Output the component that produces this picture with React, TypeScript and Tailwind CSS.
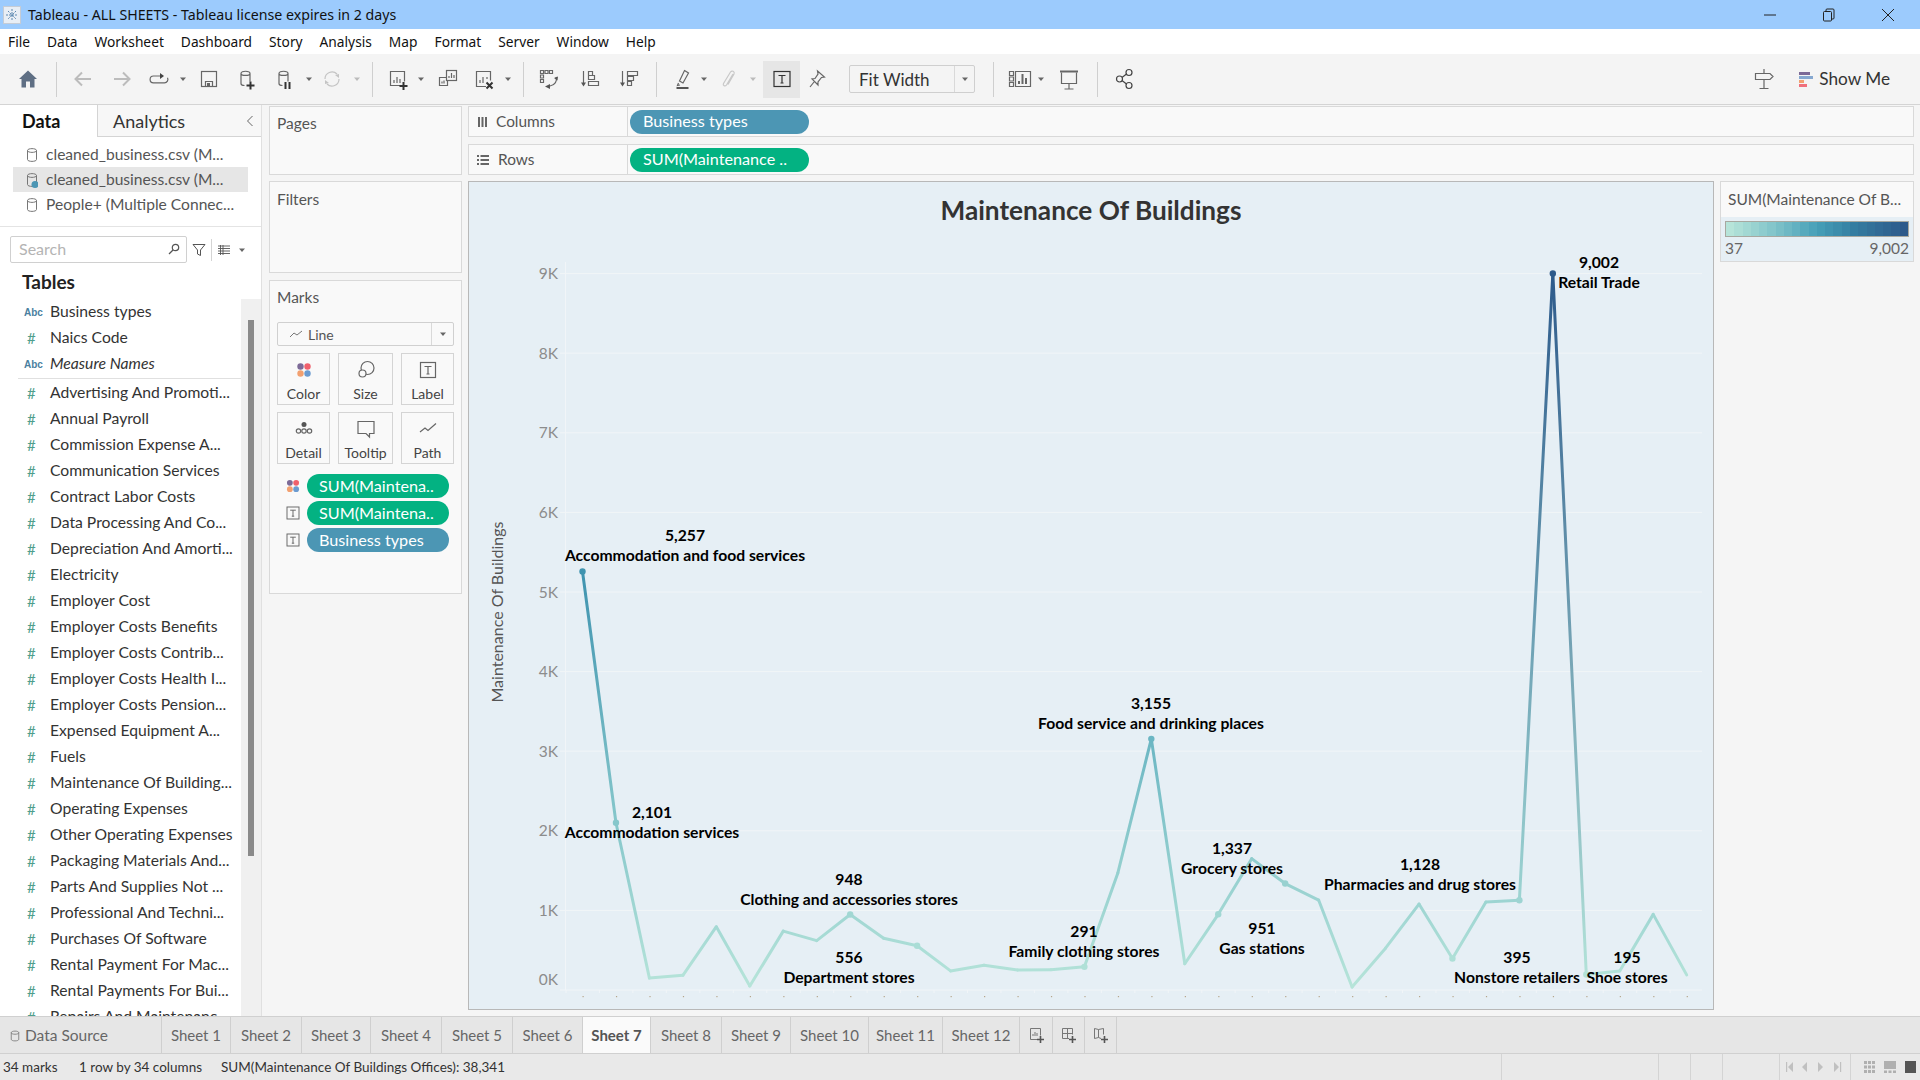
import type { ReactNode } from 'react'

const book = "font-['Lato',sans-serif]"

const connections = ['cleaned_business.csv (M...', 'cleaned_business.csv (M...', 'People+ (Multiple Connec...']

const fields = [
  'Advertising And Promoti...',
  'Annual Payroll',
  'Commission Expense A...',
  'Communication Services',
  'Contract Labor Costs',
  'Data Processing And Co...',
  'Depreciation And Amorti...',
  'Electricity',
  'Employer Cost',
  'Employer Costs Benefits',
  'Employer Costs Contrib...',
  'Employer Costs Health I...',
  'Employer Costs Pension...',
  'Expensed Equipment A...',
  'Fuels',
  'Maintenance Of Building...',
  'Operating Expenses',
  'Other Operating Expenses',
  'Packaging Materials And...',
  'Parts And Supplies Not ...',
  'Professional And Techni...',
  'Purchases Of Software',
  'Rental Payment For Mac...',
  'Rental Payments For Bui...',
  'Repairs And Maintenanc...',
]

const sheets = [
  { name: 'Sheet 1', w: 'w-[69px]' },
  { name: 'Sheet 2', w: 'w-[71px]' },
  { name: 'Sheet 3', w: 'w-[69px]' },
  { name: 'Sheet 4', w: 'w-[71px]' },
  { name: 'Sheet 5', w: 'w-[71px]' },
  { name: 'Sheet 6', w: 'w-[70px]' },
  { name: 'Sheet 7', w: 'w-[68px]', active: true },
  { name: 'Sheet 8', w: 'w-[71px]' },
  { name: 'Sheet 9', w: 'w-[69px]' },
  { name: 'Sheet 10', w: 'w-[78px]' },
  { name: 'Sheet 11', w: 'w-[74px]' },
  { name: 'Sheet 12', w: 'w-[77px]' },
]

const values = [
  5257, 2101, 150, 185, 795, 50, 740, 620, 948, 650, 556, 240, 310, 250, 255, 291, 1470, 3155, 330, 951, 1650, 1337,
  1130, 37, 525, 1080, 395, 1105, 1128, 9002, 195, 240, 950, 190,
]
const dotted = [0, 1, 8, 10, 15, 17, 19, 21, 26, 28, 29, 30]

const labels = [
  { v: '5,257', n: 'Accommodation and food services', x: 685, y: 536 },
  { v: '2,101', n: 'Accommodation services', x: 652, y: 813 },
  { v: '948', n: 'Clothing and accessories stores', x: 849, y: 880 },
  { v: '556', n: 'Department stores', x: 849, y: 958 },
  { v: '291', n: 'Family clothing stores', x: 1084, y: 932 },
  { v: '3,155', n: 'Food service and drinking places', x: 1151, y: 704 },
  { v: '1,337', n: 'Grocery stores', x: 1232, y: 849 },
  { v: '951', n: 'Gas stations', x: 1262, y: 929 },
  { v: '1,128', n: 'Pharmacies and drug stores', x: 1420, y: 865 },
  { v: '395', n: 'Nonstore retailers', x: 1517, y: 958 },
  { v: '195', n: 'Shoe stores', x: 1627, y: 958 },
  { v: '9,002', n: 'Retail Trade', x: 1599, y: 263 },
]

const stops: [number, number[]][] = [
  [0, [182, 228, 217]],
  [0.25, [130, 196, 202]],
  [0.5, [70, 160, 184]],
  [0.72, [52, 124, 160]],
  [1, [45, 90, 139]],
]

const ramp = (t: number) => {
  for (let i = 1; i < stops.length; i++) {
    if (t <= stops[i][0]) {
      const [a, ca] = stops[i - 1]
      const [b, cb] = stops[i]
      const k = (t - a) / (b - a)
      return `rgb(${ca.map((c, j) => Math.round(c + (cb[j] - c) * k)).join(',')})`
    }
  }
  return 'rgb(45,90,139)'
}

const colorOf = (v: number) => ramp((v - 37) / (9002 - 37))
const px = (i: number) => 582.5 + 33.46 * i
const py = (v: number) => 990 - v * 0.0796

const Ico = ({ children, className = '' }: { children: ReactNode; className?: string }) => (
  <svg viewBox="0 0 28 28" fill="none" stroke="#666" strokeWidth="1.2" className={`w-[28px] h-[28px] shrink-0 ${className}`}>
    {children}
  </svg>
)

const Caret = ({ className = '', light = false }: { className?: string; light?: boolean }) => (
  <svg viewBox="0 0 10 6" className={`w-[10px] h-[6px] shrink-0 ${className}`}>
    <path d="M2 1.5h6L5 5z" fill={light ? '#bbb' : '#666'} />
  </svg>
)

const Divider = ({ className = '' }: { className?: string }) => <div className={`w-px h-[35px] bg-[#cfcfcf] shrink-0 ${className}`} />

const Dots = () => (
  <>
    <circle cx="10.5" cy="10.5" r="3.2" fill="#7c6a97" stroke="none" />
    <circle cx="17.5" cy="10.5" r="3.2" fill="#f0606c" stroke="none" />
    <circle cx="10.5" cy="17.5" r="3.2" fill="#f2a070" stroke="none" />
    <circle cx="17.5" cy="17.5" r="3.2" fill="#6b9bd0" stroke="none" />
  </>
)

const TBox = () => (
  <>
    <rect x="6.5" y="6.5" width="15" height="15" />
    <path d="M10.5 10.5h7M14 10.5v7.5M12.5 18h3" />
  </>
)

const Db = () => <path d="M8 8.5c0-3 9-3 9 0v8M8 8.5c0 2.6 9 2.6 9 0M8 8.5v10c0 1.5 2 2 3.5 2" />

const Pill = ({ label, blue, className = '' }: { label: string; blue?: boolean; className?: string }) => (
  <div
    className={`h-[24px] rounded-full flex items-center text-white text-[16.2px] ${blue ? 'bg-[#4c96b4]' : 'bg-[#03b282]'} ${className}`}
  >
    {label}
  </div>
)

const MarkCard = ({ label, w, children }: { label: string; w: string; children: ReactNode }) => (
  <div className={`${w} h-[52px] border border-[#d4d4d4] flex flex-col items-center text-[14px] text-[#444]`}>
    <div className="h-[31px] flex items-center">{children}</div>
    <div className="leading-[17px]">{label}</div>
  </div>
)

const FieldRow = ({ name, abc, italic }: { name: string; abc?: boolean; italic?: boolean }) => (
  <div className="h-[26px] shrink-0 flex items-center text-[15.7px] text-[#333] whitespace-nowrap">
    <span className={`w-[50px] pl-[24px] ${abc ? "text-[#4a7f9f] text-[10px] font-bold font-['Liberation_Sans',sans-serif]" : 'text-[#4f9e8c] text-[15px] pl-[27px]'}`}>
      {abc ? 'Abc' : '#'}
    </span>
    <span className={italic ? 'italic' : ''}>{name}</span>
  </div>
)

const ShelfBox = ({ icon, label, pill, blue, className = '' }: { icon: ReactNode; label: string; pill: string; blue?: boolean; className?: string }) => (
  <div className={`h-[31px] border border-[#d9d9d9] bg-[#f9f9f9] flex items-center ${className}`}>
    <div className="w-[159px] h-full border-r border-[#d9d9d9] flex items-center pl-[8px] gap-[9px] text-[15.4px] text-[#555] pt-[1px]">
      {icon}
      {label}
    </div>
    <Pill label={pill} blue={blue} className="w-[179px] ml-[2px] pl-[13px]" />
  </div>
)

const Chart = () => (
  <svg viewBox="468 181 1246 829" className="w-[1246px] h-[829px] block">
    <text x="1091" y="220" textAnchor="middle" className="text-[26.2px] font-bold" fill="#333">
      Maintenance Of Buildings
    </text>
    <text transform="translate(503 612) rotate(-90)" textAnchor="middle" className="text-[16px]" fill="#555">
      Maintenance Of Buildings
    </text>
    <line x1="565.5" x2="565.5" y1="262" y2="990" stroke="#f1f5f8" />
    {[0, 1, 2, 3, 4, 5, 6, 7, 8, 9].map((k) => (
      <g key={k}>
        <line x1="560" x2="1702" y1={990 - k * 79.6} y2={990 - k * 79.6} stroke="#f1f5f8" />
        <text x="558" y={k === 0 ? 985 : 995.500 - k * 79.6} textAnchor="end" className="text-[15.5px]" fill="#8c8c8c">
          {k}K
        </text>
      </g>
    ))}
    {values.map((_, i) => (
      <g key={i}>
        <line x1={566 + i * 33.46} x2={566 + i * 33.46} y1="990" y2="993" stroke="#f1f5f8" />
        <rect x={px(i)} y="996" width="1.2" height="1.2" fill="#b5a58a" />
      </g>
    ))}
    <defs>
      {values.slice(1).map((v, i) => (
        <linearGradient key={i} id={`seg${i}`} gradientUnits="userSpaceOnUse" x1={px(i)} y1={py(values[i])} x2={px(i + 1)} y2={py(v)}>
          <stop offset="0" stopColor={colorOf(values[i])} />
          <stop offset="1" stopColor={colorOf(v)} />
        </linearGradient>
      ))}
    </defs>
    {values.slice(1).map((v, i) => (
      <line key={i} x1={px(i)} y1={py(values[i])} x2={px(i + 1)} y2={py(v)} stroke={`url(#seg${i})`} strokeWidth="3" strokeLinecap="round" />
    ))}
    {dotted.map((i) => (
      <circle key={i} cx={px(i)} cy={py(values[i])} r="3.2" fill={colorOf(values[i])} />
    ))}
    {labels.map((l) => (
      <g key={l.n} className="text-[15.7px] font-bold" fill="#000" textAnchor="middle">
        <text x={l.x} y={l.y + 5}>
          {l.v}
        </text>
        <text x={l.x} y={l.y + 25}>
          {l.n}
        </text>
      </g>
    ))}
  </svg>
)

export default function App() {
  return (
    <div className={`w-[1920px] h-[1080px] overflow-hidden flex flex-col bg-[#f5f5f5] ${book}`}>
      {/* title bar */}
      <div className="h-[29px] shrink-0 bg-[#9ccbfd] flex items-center font-['Noto_Sans',sans-serif] text-[14.2px] text-[#111]">
        <svg viewBox="0 0 18 18" className="w-[18px] h-[18px] ml-[3px] mr-[7px]">
          <rect x="0.5" y="0.5" width="17" height="17" fill="#e8eef5" stroke="#c5ccd6" />
          <path d="M9 3v12M3 9h12M5 5l8 8M13 5l-8 8" stroke="#5b87b0" strokeWidth="1" strokeDasharray="2 1" />
        </svg>
        Tableau - ALL SHEETS - Tableau license expires in 2 days
        <div className="ml-auto flex items-center">
          <svg viewBox="0 0 14 14" className="w-[14px] h-[14px] mr-[45px]">
            <path d="M1 7h12" stroke="#222" strokeWidth="1" />
          </svg>
          <svg viewBox="0 0 14 14" className="w-[14px] h-[14px] mr-[45px]" fill="none" stroke="#222">
            <rect x="1.5" y="3.5" width="8" height="9.5" rx="1" />
            <path d="M4 3.5V2a1 1 0 0 1 1-1h6a1 1 0 0 1 1 1v8a1 1 0 0 1-1 1H9.5" />
          </svg>
          <svg viewBox="0 0 14 14" className="w-[14px] h-[14px] mr-[25px]">
            <path d="M1 1l12 12M13 1L1 13" stroke="#222" strokeWidth="1" />
          </svg>
        </div>
      </div>

      {/* menu */}
      <div className="h-[25px] shrink-0 bg-white flex items-center gap-[17px] px-[8px] pt-[1px] font-['Noto_Sans',sans-serif] text-[13.75px] text-[#111]">
        {['File', 'Data', 'Worksheet', 'Dashboard', 'Story', 'Analysis', 'Map', 'Format', 'Server', 'Window', 'Help'].map((m) => (
          <span key={m}>{m}</span>
        ))}
      </div>

      {/* toolbar */}
      <div className="h-[51px] shrink-0 bg-[#f4f4f4] border-b border-[#d4d4d4] flex items-center pl-[14px]">
        <Ico>
          <path d="M14 5.5L23 14h-2.5v8.5h-4.5v-6h-4v6H7.500V14H5z" fill="#5f6f84" stroke="none" />
        </Ico>
        <Divider className="ml-[14px]" />
        <Ico className="ml-[12px]">
          <path d="M22 14H6.500M13 7.500L6.500 14l6.500 6.500" stroke="#bcbcbc" strokeWidth="2" />
        </Ico>
        <Ico className="ml-[11px]">
          <path d="M6 14h15.500M15 7.500l6.500 6.500-6.500 6.500" stroke="#bcbcbc" strokeWidth="2" />
        </Ico>
        <Ico className="ml-[9px]">
          <path d="M15 11H8.500a3.400 3.400 0 0 0 0 6.800h11a3.400 3.400 0 0 0 3-5" />
          <path d="M15 8l4 3-4 3z" fill="#444" stroke="none" />
        </Ico>
        <Caret className="ml-[5px]" />
        <Ico className="ml-[7px]">
          <rect x="6.500" y="6.500" width="15" height="15" />
          <path d="M10.500 21.500v-5h7v5" />
          <rect x="12" y="18" width="3" height="3" fill="#666" stroke="none" />
        </Ico>
        <Ico className="ml-[10px]">
          <Db />
          <path d="M13.500 20.500h8M17.500 16.500v8" stroke="#333" strokeWidth="2" />
        </Ico>
        <Ico className="ml-[10px]">
          <Db />
          <path d="M14.500 17v7M18.500 17v7" stroke="#333" strokeWidth="2" />
        </Ico>
        <Caret className="ml-[5px]" />
        <Ico className="ml-[4px]">
          <path d="M7 14a7 7 0 0 1 12-5M21 14a7 7 0 0 1-12 5" stroke="#c4c4c4" />
          <path d="M17 10l4-1 0 4zM11 18l-4 1 0-4z" fill="#c4c4c4" stroke="none" />
        </Ico>
        <Caret className="ml-[6px]" light />
        <Divider className="ml-[10px]" />
        <Ico className="ml-[11px]">
          <path d="M19.500 20.500h-13v-14h14v10M10 18v-3M13 18v-6M16 18v-4" />
          <path d="M15.500 21h8M19.500 17v8" stroke="#333" strokeWidth="2" />
        </Ico>
        <Caret className="ml-[4px]" />
        <Ico className="ml-[7px]">
          <rect x="13.500" y="5.500" width="10" height="10" />
          <path d="M16 13v-2M18.500 13V8M21 13v-3" />
          <path d="M13 12.500H6.500v8h8v-5M9 18.500v-2M11 18.500v-3" />
        </Ico>
        <Ico className="ml-[9px]">
          <path d="M16 21.500H6.500v-15h14v9M10 18v-3M13 18v-6M17 14v-2" />
          <path d="M16.500 17.500l6 6M22.500 17.500l-6 6" stroke="#333" strokeWidth="2" />
        </Ico>
        <Caret className="ml-[5px]" />
        <Divider className="ml-[10px]" />
        <Ico className="ml-[11px]">
          <path d="M5.500 5.500h3v3h-3zM10 5.500h3v3h-3zM14.500 5.500h3v3h-3zM5.500 10h3v3h-3zM5.500 14.500h3v3h-3z" />
          <path d="M21 12c1.500 4-1 8-6 9" />
          <path d="M10 21.500l5-2.500v5zM19 13l4-1.500-.5 4z" fill="#555" stroke="none" />
        </Ico>
        <Ico className="ml-[12px]">
          <path d="M8.500 6v14" />
          <path d="M6 17.500l2.500 4 2.500-4z" fill="#555" stroke="none" />
          <path d="M13.500 6.500h4v4h-4zM13.500 10.500h6v4h-6zM13.500 16.500h10v4h-10z" />
        </Ico>
        <Ico className="ml-[11px]">
          <path d="M8.500 6v14" />
          <path d="M6 17.500l2.500 4 2.500-4z" fill="#555" stroke="none" />
          <path d="M13.500 6.500h10v4h-10zM13.500 11.500h6v4h-6zM13.500 16.500h4v4h-4z" />
        </Ico>
        <Divider className="ml-[14px]" />
        <Ico className="ml-[12px]">
          <path d="M15.500 5.500l4 2.500-5.500 10-3.500-2z" />
          <path d="M9.500 18l-1 2.500 2.500-.5" />
          <rect x="7.500" y="22" width="12" height="2" fill="#555" stroke="none" />
        </Ico>
        <Caret className="ml-[2px]" />
        <Ico className="ml-[6px]">
          <path d="M18 9l-6.500 11c-1.500 2-4 .5-3-1.500L15.500 7c1.500-2 4.500-.5 3.500 2l-6 10.500" stroke="#c8c8c8" />
        </Ico>
        <Caret className="ml-[5px]" light />
        <div className="w-[37px] h-[37px] ml-[5px] bg-[#e6e6e6] flex items-center justify-center shrink-0">
          <Ico>
            <rect x="6" y="6.500" width="16" height="15" stroke="#333" />
            <path d="M10.500 10.500h7M14 10.500v7.500M12.500 18h3" stroke="#333" />
          </Ico>
        </div>
        <Ico className="ml-[3px]">
          <path d="M14.500 6l7 6-3 .5-3.500 4.500 0 3-6-6 3-.500 3-4.500zM11 17l-4 5" />
        </Ico>
        <div className="w-[126px] h-[28px] ml-[18px] shrink-0 bg-[#f4f4f4] border border-[#cfcfcf] rounded-[2px] flex items-center text-[17px] text-[#333]">
          <span className="w-[104px] pl-[9px] pt-[1px]">Fit Width</span>
          <div className="h-full border-l border-[#d9d9d9] flex-1 flex items-center justify-center">
            <Caret />
          </div>
        </div>
        <Divider className="ml-[18px]" />
        <Ico className="ml-[12px]">
          <path d="M3.500 6.500h4v4h-4zM3.500 12h4v4h-4zM3.500 17.500h4v4h-4zM9.500 6.500h15v15h-15z" />
          <path d="M13 19v-3M16.500 19V9M20 19v-6" strokeWidth="2" />
        </Ico>
        <Caret className="ml-[2px]" />
        <Ico className="ml-[9px]">
          <path d="M5 6.500h18" strokeWidth="2" />
          <path d="M6.500 7.500v11h15v-11M14 18.500v5M9.500 24h9" />
        </Ico>
        <Divider className="ml-[14px]" />
        <Ico className="ml-[12px]">
          <circle cx="19" cy="7.500" r="3" stroke="#444" />
          <circle cx="9.500" cy="14" r="3" stroke="#444" />
          <circle cx="19" cy="20.500" r="3" stroke="#444" />
          <path d="M12 12.500l4.500-3.500M12 15.500l4.500 3.500" stroke="#444" />
        </Ico>

        <Ico className="ml-auto mr-[-3px]">
          <path d="M14 4v19M9.500 23.500h9" />
          <path d="M5.500 8.500h14.500l3 3-3 3h-14.500z" fill="#f4f4f4" />
        </Ico>
        <div className="w-[14px] ml-[24px] flex flex-col gap-[1px] shrink-0">
          <div className="h-[3px] w-[11px] bg-[#7c6a97]" />
          <div className="h-[3px] w-[14px] bg-[#86a8d0]" />
          <div className="h-[3px] w-[5px] bg-[#f2a070]" />
          <div className="h-[3px] w-[8px] bg-[#f0707c]" />
        </div>
        <span className="ml-[6px] mr-[30px] text-[17.2px] text-[#333]">Show Me</span>
      </div>

      {/* main */}
      <div className="flex-1 min-h-0 flex">
        {/* data pane */}
        <div className="w-[262px] shrink-0 bg-white border-r border-[#e0e0e0] flex flex-col">
          <div className="h-[32px] shrink-0 flex text-[18px] text-[#333]">
            <div className="w-[98px] flex items-center pl-[22px] pt-[1px] font-bold text-[#111] border-r border-[#d4d4d4]">Data</div>
            <div className="flex-1 flex items-center pl-[15px] pt-[1px] bg-[#f7f7f7] border-b border-[#d4d4d4]">
              Analytics
              <svg viewBox="0 0 8 12" className="w-[8px] h-[12px] ml-auto mr-[7px]" fill="none" stroke="#666">
                <path d="M6.500 1L1.500 6l5 5" />
              </svg>
            </div>
          </div>
          <div className="pt-[5px] pb-[9px] border-b border-[#e4e4e4] shrink-0">
            {connections.map((c, i) => (
              <div key={i} className={`h-[25px] ml-[13px] w-[235px] flex items-center text-[15.6px] text-[#555] whitespace-nowrap ${i === 1 ? 'bg-[#e6e6e6]' : ''}`}>
                <svg viewBox="0 0 12 16" className="w-[12px] h-[16px] ml-[13px] mr-[8px] shrink-0" fill="none" stroke="#777">
                  <path d="M1.500 3.500c0-2.500 9-2.500 9 0v9c0 2.500-9 2.500-9 0zM1.500 3.500c0 2.500 9 2.500 9 0" />
                  {i === 1 && <circle cx="9" cy="12.500" r="3.500" fill="#4c96b4" stroke="none" />}
                </svg>
                {c}
              </div>
            ))}
          </div>
          <div className="mt-[9px] flex items-center shrink-0">
            <div className="w-[177px] h-[27px] ml-[10px] pb-[2px] border border-[#d0d0d0] rounded-[2px] flex items-center pl-[8px] pr-[6px] text-[16px] text-[#b4b4b4]">
              Search
              <svg viewBox="0 0 12 12" className="w-[12px] h-[12px] ml-auto" fill="none" stroke="#555" strokeWidth="1.2">
                <circle cx="7.500" cy="4.500" r="3.200" />
                <path d="M5 7l-4 4" />
              </svg>
            </div>
            <svg viewBox="0 0 14 14" className="w-[14px] h-[14px] ml-[5px]" fill="none" stroke="#555">
              <path d="M1 1.500h12L8.500 7v5.500l-3-1.500V7z" />
            </svg>
            <div className="w-px h-[22px] bg-[#d4d4d4] ml-[5px]" />
            <svg viewBox="0 0 12 10" className="w-[12px] h-[10px] ml-[6px]" fill="none" stroke="#555">
              <path d="M0 1h12M0 3.500h12M0 6h12M0 8.500h12M2.500 0v10M5 0v10" strokeWidth="0.9" />
            </svg>
            <Caret className="ml-[7px]" />
          </div>
          <div className="h-[36px] shrink-0 flex items-center pl-[22px] pt-[2px] font-bold text-[19px] text-[#222]">Tables</div>
          <div className="flex-1 min-h-0 flex">
            <div className="flex-1 min-w-0 overflow-hidden">
              <FieldRow name="Business types" abc />
              <FieldRow name="Naics Code" />
              <FieldRow name="Measure Names" abc italic />
              <div className="h-[1px] mt-[1px] mb-[1px] ml-[18px] bg-[#e0e0e0]" />
              {fields.map((f) => (
                <FieldRow key={f} name={f} />
              ))}
            </div>
            <div className="w-[20px] shrink-0 bg-[#f0f0f0] pl-[7px] pt-[21px]">
              <div className="w-[6px] h-[536px] bg-[#8a8a8a]" />
            </div>
          </div>
        </div>

        {/* shelves */}
        <div className="w-[193px] shrink-0 ml-[7px] pt-[1px] flex flex-col gap-[6px] text-[15.5px] text-[#555]">
          <div className="h-[69px] border border-[#d9d9d9] bg-[#f9f9f9] pl-[7px] pt-[5px]">Pages</div>
          <div className="h-[92px] border border-[#d9d9d9] bg-[#f9f9f9] pl-[7px] pt-[6px]">Filters</div>
          <div className="h-[314px] mt-[1px] border border-[#d9d9d9] bg-[#f9f9f9] px-[7px] pt-[5px]">
            Marks
            <div className="h-[24px] mt-[13px] border border-[#d0d0d0] rounded-[2px] flex items-center text-[14px]">
              <svg viewBox="0 0 14 10" className="w-[14px] h-[10px] ml-[11px] mr-[5px]" fill="none" stroke="#777">
                <path d="M1 8l4-4 3 2 5-4" />
              </svg>
              Line
              <div className="ml-auto w-[22px] h-full border-l border-[#d9d9d9] flex items-center justify-center">
                <Caret />
              </div>
            </div>
            <div className="flex gap-[8px] mt-[7px]">
              <MarkCard label="Color" w="w-[53px]">
                <Ico>
                  <Dots />
                </Ico>
              </MarkCard>
              <MarkCard label="Size" w="w-[55px]">
                <Ico>
                  <circle cx="15.500" cy="12" r="6.500" />
                  <circle cx="10.500" cy="17.500" r="3.500" fill="#f9f9f9" />
                </Ico>
              </MarkCard>
              <MarkCard label="Label" w="w-[53px]">
                <Ico>
                  <TBox />
                </Ico>
              </MarkCard>
            </div>
            <div className="flex gap-[8px] mt-[7px]">
              <MarkCard label="Detail" w="w-[53px]">
                <Ico>
                  <circle cx="14" cy="9.500" r="2.500" fill="#555" stroke="none" />
                  <circle cx="8.500" cy="16" r="2.200" />
                  <circle cx="14" cy="16" r="2.200" />
                  <circle cx="19.500" cy="16" r="2.200" />
                </Ico>
              </MarkCard>
              <MarkCard label="Tooltip" w="w-[55px]">
                <Ico>
                  <path d="M6 6.500h16v12h-4.500v3.500l-3.500-3.500H6z" />
                </Ico>
              </MarkCard>
              <MarkCard label="Path" w="w-[53px]">
                <Ico>
                  <path d="M6 17l5-4 3 2.500 8-7" />
                </Ico>
              </MarkCard>
            </div>
            <div className="mt-[10px] flex flex-col gap-[3px]">
              <div className="h-[24px] flex items-center">
                <Ico className="ml-[2px] scale-[0.9]">
                  <Dots />
                </Ico>
                <Pill label="SUM(Maintena.." className="w-[142px] pl-[12px]" />
              </div>
              <div className="h-[24px] flex items-center">
                <Ico className="ml-[2px] scale-[0.8]">
                  <TBox />
                </Ico>
                <Pill label="SUM(Maintena.." className="w-[142px] pl-[12px]" />
              </div>
              <div className="h-[24px] flex items-center">
                <Ico className="ml-[2px] scale-[0.8]">
                  <TBox />
                </Ico>
                <Pill label="Business types" blue className="w-[142px] pl-[12px]" />
              </div>
            </div>
          </div>
        </div>

        {/* worksheet */}
        <div className="w-[1446px] shrink-0 ml-[6px] pt-[1px] flex flex-col">
          <ShelfBox
            label="Columns"
            pill="Business types"
            blue
            icon={
              <svg viewBox="0 0 10 10" className="w-[10px] h-[10px]">
                <path d="M1 0h2v10H1zM4.500 0h2v10h-2zM8 0h2v10H8z" fill="#666" />
              </svg>
            }
          />
          <ShelfBox
            label="Rows"
            pill="SUM(Maintenance .."
            className="mt-[7px]"
            icon={
              <svg viewBox="0 0 12 10" className="w-[12px] h-[10px]">
                <path d="M0 0h2v2H0zM3.500 0H12v2H3.500zM0 4h2v2H0zM3.500 4H12v2H3.500zM0 8h2v2H0zM3.500 8H12v2H3.500z" fill="#666" />
              </svg>
            }
          />
          <div className="mt-[6px] flex items-start">
            <div className="w-[1246px] h-[829px] shrink-0 bg-[#e6eff5] outline outline-1 -outline-offset-1 outline-[#b8b8b8]">
              <Chart />
            </div>
            <div className="w-[194px] h-[81px] ml-[6px] shrink-0 border border-[#d9d9d9] bg-[#e6eff5]">
              <div className="h-[35px] bg-[#f9f9f9] flex items-center pl-[7px] text-[15.5px] text-[#555] whitespace-nowrap">SUM(Maintenance Of B...</div>
              <div className="h-[16px] mt-[4px] mx-[4px] border border-[#a8a8a0] flex">
                {Array.from({ length: 22 }, (_, i) => (
                  <div key={i} className="flex-1" style={{ backgroundColor: ramp(i / 21) }} />
                ))}
              </div>
              <div className="flex justify-between px-[4px] text-[15.5px] text-[#666]">
                <span>37</span>
                <span>9,002</span>
              </div>
            </div>
          </div>
        </div>
      </div>

      {/* sheet tabs */}
      <div className="h-[38px] shrink-0 bg-[#e6e6e6] border-y border-[#d0d0d0] flex text-[15px] text-[#666] whitespace-nowrap">
        <div className="w-[162px] shrink-0 border-r border-[#cfcfcf] flex items-center pl-[10px] pt-[1px] gap-[5px] text-[15.5px]">
          <svg viewBox="0 0 12 14" className="w-[10px] h-[12px]" fill="none" stroke="#777">
            <path d="M1.500 3c0-2.500 9-2.500 9 0v8c0 2.500-9 2.500-9 0zM1.500 3c0 2.500 9 2.500 9 0" />
          </svg>
          Data Source
        </div>
        {sheets.map((s) => (
          <div
            key={s.name}
            className={`${s.w} shrink-0 pt-[1px] border-r border-[#cfcfcf] flex items-center justify-center ${s.active ? 'bg-[#fafafa] font-bold text-[#555]' : ''}`}
          >
            {s.name}
          </div>
        ))}
        <div className="w-[33px] shrink-0 border-r border-[#cfcfcf] flex items-center justify-center pl-[1px]">
          <svg viewBox="0 0 16 16" className="w-[16px] h-[16px]" fill="none" stroke="#777">
            <path d="M9 12.500H1.500v-11h10v7M4 9V7M6 9V5M8 9V6" />
            <path d="M8 12.500h7M11.500 9v7" stroke="#555" strokeWidth="1.600" />
          </svg>
        </div>
        <div className="w-[32px] shrink-0 border-r border-[#cfcfcf] flex items-center justify-center">
          <svg viewBox="0 0 16 16" className="w-[16px] h-[16px]" fill="none" stroke="#777">
            <path d="M8 11.500H1.500v-10h10v6M1.500 6.500h10M6.500 1.500v10" />
            <path d="M8 12.500h7M11.500 9v7" stroke="#555" strokeWidth="1.600" />
          </svg>
        </div>
        <div className="w-[32px] shrink-0 border-r border-[#cfcfcf] flex items-center justify-center">
          <svg viewBox="0 0 16 16" className="w-[16px] h-[16px]" fill="none" stroke="#777">
            <path d="M8 11.500l-2.500-1-4 1v-10l4 1 5-1v6M5.500 2.500v8" />
            <path d="M8 12.500h7M11.500 9v7" stroke="#555" strokeWidth="1.600" />
          </svg>
        </div>
      </div>

      {/* status bar */}
      <div className="h-[26px] shrink-0 bg-[#e9e9e9] flex items-center text-[13.5px] text-[#333] whitespace-nowrap">
        <div className="w-[1501px] shrink-0 flex pl-[3px]">
          <span className="w-[76px]">34 marks</span>
          <span className="w-[142px]">1 row by 34 columns</span>
          <span>SUM(Maintenance Of Buildings Offices): 38,341</span>
        </div>
        <div className="w-[157px] h-full shrink-0 border-l border-[#d4d4d4]" />
        <div className="w-[32px] h-full shrink-0 border-l border-[#d4d4d4]" />
        <div className="w-[32px] h-full shrink-0 border-l border-[#d4d4d4]" />
        <div className="w-[57px] h-full shrink-0 border-l border-[#d4d4d4]" />
        <div className="w-[71px] h-full shrink-0 border-l border-[#d4d4d4] flex items-center justify-center">
          <svg viewBox="0 0 58 10" className="w-[58px] h-[10px]" fill="#c0c0c0">
            <path d="M0 0h1.200v10H0zM7 0v10L2 5zM21 0v10l-5-5zM32 0v10l5-5zM48 0v10l5-5zM54 0h1.200v10H54z" />
          </svg>
        </div>
        <div className="w-[70px] h-full shrink-0 border-l border-[#d4d4d4] flex items-center gap-[9px] pl-[13px]">
          <svg viewBox="0 0 11 12" className="w-[11px] h-[12px]" fill="#b0b0b0">
            <path d="M0 0h3v3H0zM4 0h3v3H4zM8 0h3v3H8zM0 4.500h3v3H0zM4 4.500h3v3H4zM8 4.500h3v3H8zM0 9h3v3H0zM4 9h3v3H4zM8 9h3v3H8z" />
          </svg>
          <svg viewBox="0 0 12 12" className="w-[12px] h-[12px]" fill="#b0b0b0">
            <path d="M0 0h12v8H0zM0 9.500h3V12H0zM4.500 9.500h3V12h-3zM9 9.500h3V12H9z" />
          </svg>
          <div className="w-[11px] h-[12px] bg-[#555]" />
        </div>
      </div>
    </div>
  )
}
